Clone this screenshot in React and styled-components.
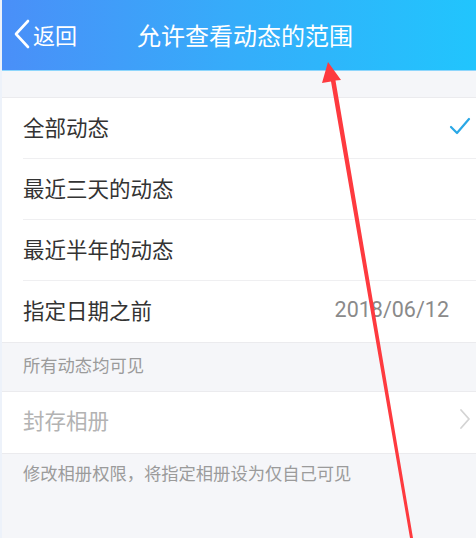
import React from "react";
import styled, { createGlobalStyle } from "styled-components";

const Global = createGlobalStyle`
  html, body { margin: 0; padding: 0; background: #f5f6f9; }
  body { font-family: "Noto Sans CJK SC", "Noto Sans", sans-serif; }
  * { box-sizing: border-box; }
`;

const Page = styled.div`
  position: relative;
  width: 476px;
  height: 538px;
  overflow: hidden;
  background: #f5f6f9;
  border-left: 2px solid #edf2fa;
`;

const Header = styled.header`
  height: 71px;
  display: flex;
  align-items: center;
  position: relative;
  background: linear-gradient(90deg, #4a8ff8 0%, #35adfa 50%, #21c5fd 100%);
  border-bottom: 1px solid #8ed6fc;
  color: #fff;
  padding-bottom: 2px;
`;

const Back = styled.div`
  display: flex;
  align-items: center;
  gap: 1px;
  padding-left: 10px;
  font-size: 22px;
  width: 120px;
`;

const Title = styled.div`
  font-size: 24px;
  margin-left: 15px;
`;

const Gap = styled.div`
  height: 26px;
`;

const Group = styled.div`
  background: #fff;
  border-top: ${(p) => (p.$top ? "1px solid #ebebee" : "none")};
  border-bottom: ${(p) => (p.$bottom ? "1px solid #ebebee" : "none")};
`;

const Row = styled.div`
  height: 61px;
  margin-left: 21px;
  padding: 0 5px ${(p) => (p.$lift ? 7 : 4)}px 0;
  display: flex;
  align-items: center;
  justify-content: space-between;
  border-bottom: ${(p) => (p.$last ? "none" : "1px solid #efeff1")};
`;

const Label = styled.span`
  font-size: 21.5px;
  color: ${(p) => (p.$muted ? "#b3b3b3" : "#333")};
`;

const Value = styled.span`
  font-family: Roboto, "Noto Sans", sans-serif;
  font-size: 21.5px;
  color: #8a8a8a;
  margin-right: 22px;
`;

const Note = styled.div`
  font-size: 17.3px;
  color: #9b9b9b;
  padding: 0 21px 5px;
  height: ${(p) => p.$h}px;
  display: flex;
  align-items: center;
  border-top: ${(p) => (p.$top ? "1px solid #ebebee" : "none")};
`;

const Overlay = styled.svg`
  position: absolute;
  left: -2px;
  top: 0;
  pointer-events: none;
`;

export default function App() {
  return (
    <>
      <Global />
      <Page>
        <Header>
          <Back>
            <svg width="20" height="30" viewBox="0 0 20 30">
              <path d="M16 2 L4 15 L16 28" fill="none" stroke="#fff" strokeWidth="2.6" strokeLinecap="round" strokeLinejoin="round" />
            </svg>
            <span>返回</span>
          </Back>
          <Title>允许查看动态的范围</Title>
        </Header>
        <Gap />
        <Group $top>
          <Row>
            <Label>全部动态</Label>
            <svg width="22" height="20" viewBox="0 0 22 20">
              <path d="M2 11 L8 17 L20 3" fill="none" stroke="#2aa8e6" strokeWidth="2.2" strokeLinecap="round" strokeLinejoin="round" />
            </svg>
          </Row>
          <Row>
            <Label>最近三天的动态</Label>
          </Row>
          <Row>
            <Label>最近半年的动态</Label>
          </Row>
          <Row $last>
            <Label>指定日期之前</Label>
            <Value>2018/06/12</Value>
          </Row>
        </Group>
        <Note $h={49} $top>所有动态均可见</Note>
        <Group $top $bottom>
          <Row $last $lift>
            <Label $muted>封存相册</Label>
            <svg width="12" height="22" viewBox="0 0 12 22">
              <path d="M2 2 L10 11 L2 20" fill="none" stroke="#d4d4d4" strokeWidth="1.8" strokeLinecap="round" strokeLinejoin="round" />
            </svg>
          </Row>
        </Group>
        <Note $h={42}>修改相册权限，将指定相册设为仅自己可见</Note>
        <Overlay width="476" height="538" viewBox="0 0 476 538">
          <polygon points="328,62 341,80 335.5,80.5 413,538 410,538 331,81.5 322,83" fill="#fe3a3f" />
        </Overlay>
      </Page>
    </>
  );
}
